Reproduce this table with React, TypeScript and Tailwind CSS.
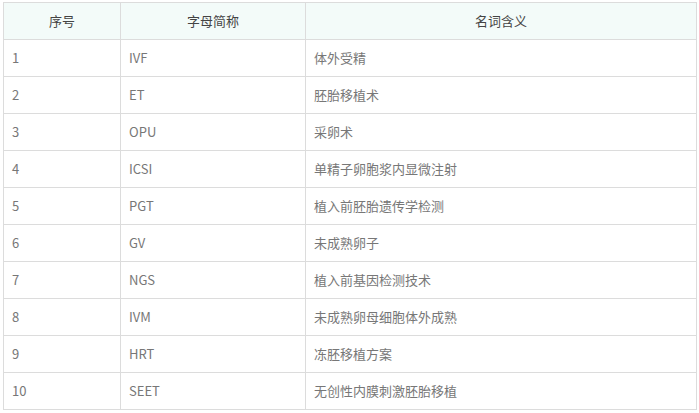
import React from 'react';

const rows: [string, string, string][] = [
  ['1', 'IVF', '体外受精'],
  ['2', 'ET', '胚胎移植术'],
  ['3', 'OPU', '采卵术'],
  ['4', 'ICSI', '单精子卵胞浆内显微注射'],
  ['5', 'PGT', '植入前胚胎遗传学检测'],
  ['6', 'GV', '未成熟卵子'],
  ['7', 'NGS', '植入前基因检测技术'],
  ['8', 'IVM', '未成熟卵母细胞体外成熟'],
  ['9', 'HRT', '冻胚移植方案'],
  ['10', 'SEET', '无创性内膜刺激胚胎移植'],
];

const App: React.FC = () => {
  return (
    <div
      className="w-[699px] h-[413px] bg-white pt-[2px] pl-[3px]"
      style={{ fontFamily: '"Microsoft YaHei", "Noto Sans CJK SC", sans-serif' }}
    >
      <table className="border-collapse text-[13px] table-fixed w-[693px]">
        <colgroup>
          <col className="w-[117px]" />
          <col className="w-[185px]" />
          <col className="w-[391px]" />
        </colgroup>
        <thead>
          <tr className="bg-[#f3fbf9] h-[37px]">
            <th className="border border-[#dcdcdc] font-normal text-[#444] text-center">序号</th>
            <th className="border border-[#dcdcdc] font-normal text-[#444] text-center">字母简称</th>
            <th className="border border-[#dcdcdc] font-normal text-[#444] text-center">名词含义</th>
          </tr>
        </thead>
        <tbody>
          {rows.map(([n, abbr, meaning]) => (
            <tr key={n} className="h-[37px]">
              <td className="border border-[#dcdcdc] text-[#777] pl-[8px]">{n}</td>
              <td className="border border-[#dcdcdc] text-[#777] pl-[8px]">{abbr}</td>
              <td className="border border-[#dcdcdc] text-[#777] pl-[8px]">{meaning}</td>
            </tr>
          ))}
        </tbody>
      </table>
    </div>
  );
};

export default App;
